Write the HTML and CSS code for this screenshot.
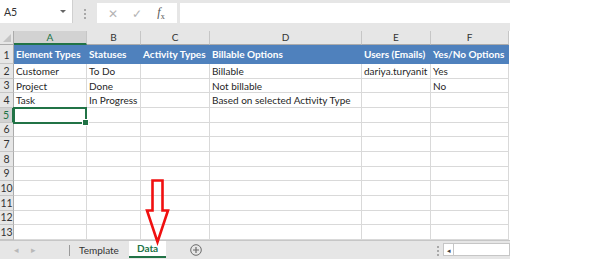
FILE: index.html
```html
<!DOCTYPE html>
<html lang="en">
<head>
    <meta charset="UTF-8">
    <title>Data sheet</title>
    <link rel="stylesheet" href="styles.css">
</head>
<body>
    <div class="app">
        <!-- Formula bar -->
        <div class="formula-bar">
            <div class="name-box">
                <span>A5</span>
                <span class="drop"></span>
            </div>
            <div class="grip"><i></i><i></i><i></i></div>
            <div class="fx-box">
                <span class="fx-btn">&#x2715;</span>
                <span class="fx-btn">&#x2713;</span>
                <span class="fx-btn fx"><i>f</i><sub>x</sub></span>
            </div>
            <div class="formula-input"></div>
        </div>

        <!-- Sheet grid -->
        <div class="sheet">
            <div class="corner"><span></span></div>
            <div class="col-head active">A</div>
            <div class="col-head">B</div>
            <div class="col-head">C</div>
            <div class="col-head">D</div>
            <div class="col-head">E</div>
            <div class="col-head">F</div>

            <div class="row-head tall">1</div>
            <div class="cell th">Element Types</div>
            <div class="cell th">Statuses</div>
            <div class="cell th">Activity Types</div>
            <div class="cell th">Billable Options</div>
            <div class="cell th">Users (Emails)</div>
            <div class="cell th">Yes/No Options</div>

            <div class="row-head">2</div>
            <div class="cell">Customer</div>
            <div class="cell">To Do</div>
            <div class="cell"></div>
            <div class="cell">Billable</div>
            <div class="cell">dariya.turyanit</div>
            <div class="cell">Yes</div>

            <div class="row-head">3</div>
            <div class="cell">Project</div>
            <div class="cell">Done</div>
            <div class="cell"></div>
            <div class="cell">Not billable</div>
            <div class="cell"></div>
            <div class="cell">No</div>

            <div class="row-head">4</div>
            <div class="cell">Task</div>
            <div class="cell">In Progress</div>
            <div class="cell"></div>
            <div class="cell">Based on selected Activity Type</div>
            <div class="cell"></div>
            <div class="cell"></div>

            <div class="row-head active">5</div>
            <div class="cell selected"><span class="handle"></span></div>
            <div class="cell"></div><div class="cell"></div><div class="cell"></div><div class="cell"></div><div class="cell"></div>

            <div class="row-head">6</div>
            <div class="cell"></div><div class="cell"></div><div class="cell"></div><div class="cell"></div><div class="cell"></div><div class="cell"></div>
            <div class="row-head">7</div>
            <div class="cell"></div><div class="cell"></div><div class="cell"></div><div class="cell"></div><div class="cell"></div><div class="cell"></div>
            <div class="row-head">8</div>
            <div class="cell"></div><div class="cell"></div><div class="cell"></div><div class="cell"></div><div class="cell"></div><div class="cell"></div>
            <div class="row-head">9</div>
            <div class="cell"></div><div class="cell"></div><div class="cell"></div><div class="cell"></div><div class="cell"></div><div class="cell"></div>
            <div class="row-head">10</div>
            <div class="cell"></div><div class="cell"></div><div class="cell"></div><div class="cell"></div><div class="cell"></div><div class="cell"></div>
            <div class="row-head">11</div>
            <div class="cell"></div><div class="cell"></div><div class="cell"></div><div class="cell"></div><div class="cell"></div><div class="cell"></div>
            <div class="row-head">12</div>
            <div class="cell"></div><div class="cell"></div><div class="cell"></div><div class="cell"></div><div class="cell"></div><div class="cell"></div>
            <div class="row-head">13</div>
            <div class="cell"></div><div class="cell"></div><div class="cell"></div><div class="cell"></div><div class="cell"></div><div class="cell"></div>
        </div>

        <!-- Sheet tabs -->
        <div class="tab-bar">
            <div class="tab-nav">
                <span class="nav-arrow">&#x25C2;</span>
                <span class="nav-arrow">&#x25B8;</span>
            </div>
            <div class="tab-sep"></div>
            <div class="tab">Template</div>
            <div class="tab current">Data</div>
            <div class="add-sheet">
                <svg width="12" height="12" viewBox="0 0 12 12">
                    <circle cx="6" cy="6" r="5.3" fill="none" stroke="#6b6b6b" stroke-width="1"/>
                    <path d="M6 3v6M3 6h6" stroke="#6b6b6b" stroke-width="1.2"/>
                </svg>
            </div>
            <div class="spacer"></div>
            <div class="grip small"><i></i><i></i><i></i></div>
            <div class="hscroll">
                <span class="hscroll-btn">&#x25C2;</span>
                <span class="hscroll-track"></span>
            </div>
        </div>

        <!-- annotation arrow -->
        <svg class="arrow" width="26" height="68" viewBox="0 0 26 68">
            <path d="M7.5 2.5 H17.5 V32.5 H23 L12.5 64 L2 32.5 H7.5 Z" fill="none" stroke="#f01010" stroke-width="2.6" stroke-linejoin="miter"/>
        </svg>
    </div>
</body>
</html>
```

FILE: styles.css
```css
body {
    margin: 0;
    background: #ffffff;
    font-family: "Lato", "Liberation Sans", sans-serif;
    font-size: 10px;
    color: #222222;
}

.app {
    position: relative;
    width: 510px;
    height: 259px;
    display: flex;
    flex-direction: column;
    background: #e6e6e6;
}

/* formula bar */
.formula-bar {
    display: flex;
    height: 31px;
    background: #e6e6e6;
}

.name-box {
    width: 73px;
    height: 23px;
    background: #ffffff;
    border-right: 1px solid #d0d0d0;
    display: flex;
    align-items: center;
    justify-content: space-between;
    padding: 0 6px 0 4px;
    box-sizing: border-box;
    color: #333333;
    font-size: 10.5px;
}

.drop {
    width: 0;
    height: 0;
    border-left: 3px solid transparent;
    border-right: 3px solid transparent;
    border-top: 3px solid #666666;
}

.grip {
    width: 24px;
    display: flex;
    flex-direction: column;
    align-items: center;
    gap: 2px;
    padding-top: 9px;
    box-sizing: border-box;
}

.grip i {
    width: 2px;
    height: 2px;
    background: #a8a8a8;
}

.fx-box {
    width: 80px;
    height: 20px;
    margin-top: 3px;
    background: #ffffff;
    display: flex;
    align-items: center;
    justify-content: space-around;
    padding: 0 4px;
    box-sizing: border-box;
}

.fx-btn {
    color: #b4b4b4;
    font-size: 12px;
    width: 20px;
    text-align: center;
}

.fx {
    color: #555555;
    font-family: "Liberation Serif", serif;
    font-size: 12px;
}

.fx sub {
    font-size: 8px;
}

.formula-input {
    flex: 1;
    height: 20px;
    margin-top: 3px;
    margin-left: 3px;
    background: #ffffff;
}

/* grid */
.sheet {
    display: grid;
    grid-template-columns: 14px 73px 54px 69px 152px 69px 78px;
    grid-template-rows: 14px 19px repeat(12, 14.67px);
    background: #ffffff;
}

.corner {
    background: #e6e6e6;
    border-right: 1px solid #ababab;
    border-bottom: 1px solid #ababab;
    position: relative;
}

.corner span {
    position: absolute;
    right: 2px;
    bottom: 2px;
    width: 0;
    height: 0;
    border-left: 8px solid transparent;
    border-bottom: 8px solid #c4c4c4;
}

.col-head {
    background: #e6e6e6;
    border-right: 1px solid #c6c6c6;
    border-bottom: 1px solid #ababab;
    text-align: center;
    font-size: 10px;
    line-height: 13px;
    color: #333333;
}

.col-head.active {
    background: #d2d2d2;
    color: #217346;
    border-bottom: 2px solid #217346;
}

.row-head {
    background: #e6e6e6;
    border-right: 1px solid #ababab;
    border-bottom: 1px solid #c6c6c6;
    font-size: 10.5px;
    display: flex;
    align-items: flex-end;
    justify-content: center;
    color: #333333;
    line-height: 13px;
}

.row-head.tall {
    padding-bottom: 1px;
}

.row-head.active {
    background: #d2d2d2;
    color: #217346;
    border-right: 2px solid #217346;
}

.cell {
    border-right: 1px solid #d9d9d9;
    border-bottom: 1px solid #d9d9d9;
    padding: 0 2px;
    white-space: nowrap;
    overflow: hidden;
    line-height: 14px;
    color: #1f1f1f;
}

.cell.th {
    background: #4f81bd;
    color: #ffffff;
    font-weight: bold;
    line-height: 19px;
    border-right: none;
    border-bottom: none;
}

.cell.selected {
    position: relative;
    overflow: visible;
    border: 2px solid #217346;
    margin: -1px 0 -1px -1px;
}

.handle {
    position: absolute;
    right: -4px;
    bottom: -4px;
    width: 5px;
    height: 5px;
    background: #217346;
    border: 1px solid #ffffff;
}

/* tabs */
.tab-bar {
    flex: 1;
    display: flex;
    align-items: stretch;
    background: #e6e6e6;
    border-top: 1px solid #c6c6c6;
}

.tab-nav {
    width: 60px;
    display: flex;
    align-items: center;
    gap: 12px;
    padding-left: 14px;
    box-sizing: border-box;
    color: #b8b8b8;
    font-size: 9px;
}

.tab-sep {
    width: 1px;
    margin: 4px 0 3px 9px;
    background: #9a9a9a;
}

.tab {
    padding: 0 10px 0 9px;
    display: flex;
    align-items: center;
    color: #333333;
    font-size: 10px;
}

.tab.current {
    background: #ffffff;
    color: #217346;
    font-weight: bold;
    border-bottom: 2px solid #217346;
    margin: 0 0 1px;
    padding: 0 8px;
}

.add-sheet {
    display: flex;
    align-items: center;
    padding-left: 24px;
}

.add-sheet svg {
    display: block;
}

.spacer {
    flex: 1;
}

.grip.small {
    width: 10px;
    padding-top: 5px;
}

.hscroll {
    display: flex;
    align-items: center;
    width: 67px;
}

.hscroll-btn {
    width: 11px;
    height: 13px;
    background: #ffffff;
    border: 1px solid #c6c6c6;
    font-size: 7px;
    line-height: 13px;
    text-align: center;
    color: #444444;
    box-sizing: border-box;
}

.hscroll-track {
    flex: 1;
    height: 13px;
    background: #ffffff;
    border: 1px solid #c6c6c6;
    border-left: none;
    box-sizing: border-box;
}

.arrow {
    position: absolute;
    left: 145px;
    top: 178px;
}
```
